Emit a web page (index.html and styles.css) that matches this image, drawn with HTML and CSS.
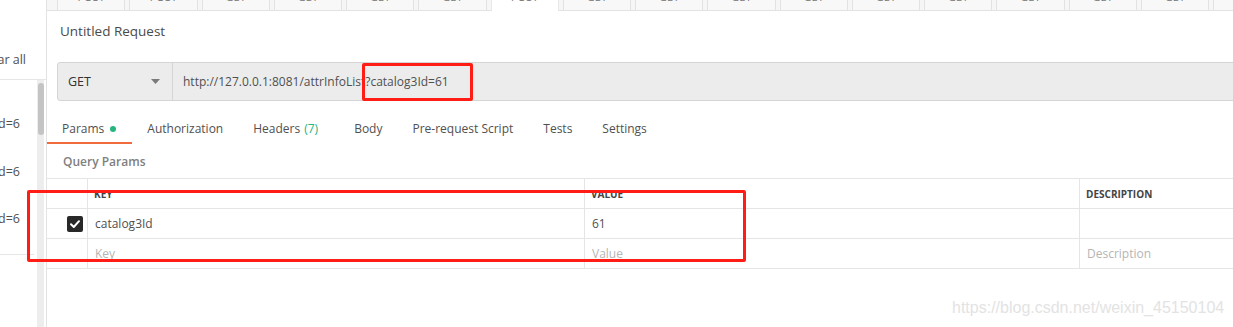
FILE: index.html
```html
<!DOCTYPE html>
<html>
<head>
<meta charset="utf-8">
<link rel="stylesheet" href="styles.css">
</head>
<body>
<div class="app">
  <aside class="sidebar">
    <div class="side-head"><span>Clear all</span></div>
    <div class="side-body">
      <div class="history">
        <div class="hist-item"><span>attrInfoList?catalog3Id=6</span></div>
        <div class="hist-item"><span>attrInfoList?catalog3Id=6</span></div>
        <div class="hist-item"><span>attrInfoList?catalog3Id=6</span></div>
        <div class="hist-sep"></div>
      </div>
      <div class="scroll-track"><div class="scroll-thumb"></div></div>
    </div>
  </aside>

  <main class="main">
    <div class="tabstrip">
      <div class="tab"><span>POST</span></div>
      <div class="tab"><span>POST</span></div>
      <div class="tab"><span>GET</span></div>
      <div class="tab"><span>GET</span></div>
      <div class="tab"><span>GET</span></div>
      <div class="tab"><span>GET</span></div>
      <div class="tab active"><span>POST</span></div>
      <div class="tab"><span>GET</span></div>
      <div class="tab"><span>GET</span></div>
      <div class="tab"><span>GET</span></div>
      <div class="tab"><span>GET</span></div>
      <div class="tab"><span>GET</span></div>
      <div class="tab"><span>GET</span></div>
      <div class="tab"><span>GET</span></div>
      <div class="tab"><span>GET</span></div>
      <div class="tab"><span>GET</span></div>
      <div class="tab"><span>GET</span></div>
    </div>

    <div class="req-title">Untitled Request</div>

    <div class="urlbar">
      <div class="method">
        <span>GET</span>
        <svg class="caret" width="9" height="5" viewBox="0 0 9 5"><path d="M0 0 H9 L4.5 5 Z" fill="#7a7a7a"/></svg>
      </div>
      <div class="url">http://127.0.0.1:8081/attrInfoList?catalog3Id=61</div>
    </div>

    <nav class="reqtabs">
      <div class="reqtab active">Params <i class="dot"></i></div>
      <div class="reqtab">Authorization</div>
      <div class="reqtab headers">Headers <span class="count">(7)</span></div>
      <div class="reqtab">Body</div>
      <div class="reqtab">Pre-request Script</div>
      <div class="reqtab">Tests</div>
      <div class="reqtab">Settings</div>
    </nav>

    <div class="section-title">Query Params</div>

    <div class="ptable">
      <div class="prow phead">
        <div class="cell"></div>
        <div class="cell">KEY</div>
        <div class="cell">VALUE</div>
        <div class="cell">DESCRIPTION</div>
      </div>
      <div class="prow">
        <div class="cell check-cell">
          <span class="checkbox">
            <svg width="12" height="12" viewBox="0 0 12 12"><path d="M2 6.3 L4.8 9 L10 3.2" fill="none" stroke="#fff" stroke-width="2" stroke-linecap="round" stroke-linejoin="round"/></svg>
          </span>
        </div>
        <div class="cell">catalog3Id</div>
        <div class="cell">61</div>
        <div class="cell"></div>
      </div>
      <div class="prow placeholder">
        <div class="cell"></div>
        <div class="cell">Key</div>
        <div class="cell">Value</div>
        <div class="cell">Description</div>
      </div>
    </div>
  </main>

  <div class="mark mark-url"></div>
  <div class="mark mark-row"></div>
  <div class="watermark">https://blog.csdn.net/weixin_45150104</div>
</div>
</body>
</html>
```

FILE: styles.css
```css
* { box-sizing: border-box; margin: 0; padding: 0; }

html, body {
  width: 1233px;
  height: 327px;
  overflow: hidden;
  background: #fff;
}

body {
  font-family: "Open Sans", "Noto Sans", sans-serif;
  color: #505050;
}

.app {
  position: relative;
  display: flex;
  width: 1233px;
  height: 327px;
  overflow: hidden;
}

/* ---------- sidebar ---------- */
.sidebar {
  width: 47px;
  flex: none;
  border-right: 1px solid #e3e3e3;
  display: flex;
  flex-direction: column;
}

.side-head {
  height: 80px;
  border-bottom: 1px solid #e6e6e6;
  display: flex;
  justify-content: flex-end;
  align-items: flex-end;
  padding: 0 20px 10px 0;
  font-size: 12.5px;
  line-height: 18px;
  white-space: nowrap;
  overflow: hidden;
}

.side-body {
  flex: 1;
  display: flex;
}

.history {
  width: 37px;
  padding-top: 35px;
  overflow: hidden;
}

.hist-item {
  display: flex;
  justify-content: flex-end;
  padding-right: 17px;
  font-size: 12.5px;
  line-height: 18px;
  white-space: nowrap;
  margin-bottom: 29.5px;
}

.hist-sep {
  margin-top: -4px;
  margin-right: 3px;
  border-top: 1px solid #e6e6e6;
}

.scroll-track {
  width: 7px;
  margin-right: 2px;
  background: #ededed;
  padding-top: 3px;
}

.scroll-thumb {
  width: 6px;
  height: 52px;
  margin: 0 auto;
  border-radius: 3px;
  background: #c4c4c4;
}

/* ---------- main ---------- */
.main {
  flex: 1;
  min-width: 0;
  overflow: hidden;
  display: flex;
  flex-direction: column;
}

.tabstrip {
  height: 11px;
  flex: none;
  display: flex;
  gap: 4px;
  padding-left: 10px;
  background: #f6f6f6;
  border-bottom: 1px solid #e2e2e2;
}

.tab {
  width: 68.25px;
  flex: none;
  height: 10px;
  background: #f8f8f8;
  border-left: 1px solid #e2e2e2;
  border-right: 1px solid #e2e2e2;
  overflow: hidden;
  text-align: center;
}

.tab span {
  display: block;
  margin-top: -9px;
  font-size: 11px;
  line-height: 12px;
  color: #777;
}

.tab.active {
  background: #fff;
  height: 11px;
  border-color: #e8e8e8;
}

.req-title {
  padding: 11px 0 0 13px;
  font-size: 13.5px;
  line-height: 18px;
  color: #4a4a4a;
}

.urlbar {
  margin: 22px -20px 0 10px;
  height: 39px;
  flex: none;
  display: flex;
  background: #ececec;
  border: 1px solid #d5d5d5;
  border-radius: 3px;
}

.method {
  width: 115px;
  flex: none;
  display: flex;
  align-items: center;
  justify-content: space-between;
  padding: 0 12px 0 10px;
  border-right: 1px solid #d5d5d5;
  font-size: 12.5px;
  color: #333;
}

.url {
  display: flex;
  align-items: center;
  padding-left: 10px;
  font-size: 12px;
  color: #505050;
  white-space: nowrap;
}

.reqtabs {
  display: flex;
  flex: none;
}

.reqtab {
  padding: 19px 15px 4px;
  font-size: 12px;
  line-height: 18px;
  color: #505050;
  border-bottom: 2px solid transparent;
  white-space: nowrap;
  display: flex;
  align-items: center;
}

.reqtab.active {
  border-bottom-color: #f06b3b;
  padding-right: 16px;
}

.reqtab.headers {
  padding-right: 21px;
}

.dot {
  display: inline-block;
  width: 6px;
  height: 6px;
  margin-left: 6px;
  border-radius: 50%;
  background: #26b47f;
}

.count {
  color: #26b47f;
  margin-left: 4px;
}

.section-title {
  padding: 9px 0 7px 16px;
  font-size: 12px;
  line-height: 18px;
  font-weight: 600;
  color: #808080;
}

.ptable {
  width: calc(100% + 40px);
  border-top: 1px solid #e5e5e5;
}

.prow {
  display: grid;
  grid-template-columns: 41px 497px 495px 1fr;
  height: 30px;
  border-bottom: 1px solid #e5e5e5;
}

.prow.phead { height: 30px; }

.cell {
  border-right: 1px solid #e5e5e5;
  display: flex;
  align-items: center;
  padding-left: 7px;
  font-size: 12px;
  color: #505050;
  white-space: nowrap;
}

.cell:last-child { border-right: none; }

.phead .cell {
  font-size: 10px;
  font-weight: 700;
  color: #444;
  padding-top: 1px;
  padding-left: 6px;
}

.placeholder .cell { color: #b5b5b5; }

.check-cell {
  padding-left: 20px;
}

.checkbox {
  width: 16px;
  height: 16px;
  border-radius: 2px;
  background: #282828;
  display: flex;
  align-items: center;
  justify-content: center;
}

/* ---------- annotations ---------- */
.mark {
  position: absolute;
  border: 3px solid #ff1d16;
  border-radius: 2px;
}

.mark-url {
  left: 362px;
  top: 63px;
  width: 111px;
  height: 38px;
}

.mark-row {
  left: 27px;
  top: 190px;
  width: 719px;
  height: 72px;
}

.watermark {
  position: absolute;
  left: 952px;
  top: 299px;
  font-family: "Liberation Sans", Arial, sans-serif;
  font-size: 16px;
  line-height: 18px;
  color: #e3e3e3;
  white-space: nowrap;
}
```
